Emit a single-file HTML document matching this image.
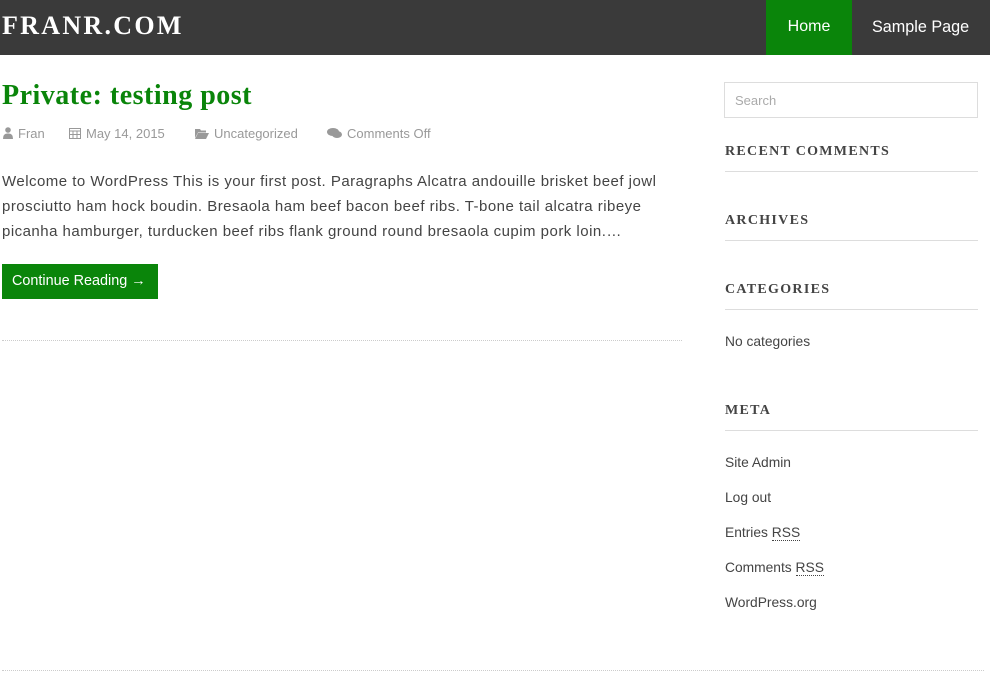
<!DOCTYPE html>
<html><head><meta charset="utf-8"><style>
*{margin:0;padding:0;box-sizing:border-box}
body{width:990px;height:687px;background:#fff;font-family:"Liberation Sans",sans-serif;position:relative;overflow:hidden;color:#444}
.hdr{position:absolute;left:0;top:0;width:990px;height:55px;background:#3a3a3a}
.logo{position:absolute;left:2px;top:11px;font-family:"Liberation Serif",serif;font-weight:bold;font-size:26px;color:#fff;letter-spacing:2.3px}
.home{position:absolute;left:766px;top:0;width:86px;height:55px;background:#0a850a;color:#fff;font-size:16px;text-align:center;line-height:54px}
.sp{position:absolute;left:872px;top:0;height:55px;color:#fff;font-size:16.2px;line-height:54px}
h1{position:absolute;left:2px;top:80px;font-family:"Liberation Serif",serif;font-size:28px;color:#0a850a;font-weight:bold;letter-spacing:0.5px}
.meta{position:absolute;top:126px;font-size:13px;color:#999}
.meta svg{vertical-align:-1px;margin-right:5px}
.p{position:absolute;left:2px;top:169px;width:700px;font-size:15px;line-height:25px;color:#444;white-space:nowrap;letter-spacing:0.48px}
.btn{position:absolute;left:2px;top:264px;width:156px;height:35px;background:#0a850a;color:#fff;font-size:14.4px;line-height:34px;padding-left:10px}
.hr1{position:absolute;left:2px;top:340px;width:680px;border-top:1px dotted #ccc}
.hr2{position:absolute;left:2px;top:670px;width:982px;border-top:1px dotted #ccc}
.search{position:absolute;left:724px;top:82px;width:254px;height:36px;border:1px solid #ddd;font-size:13px;color:#aaa;padding:10px 0 0 10px}
.wt{position:absolute;left:725px;width:253px;font-family:"Liberation Serif",serif;font-weight:bold;font-size:14px;letter-spacing:1.3px;color:#444;padding-bottom:11px;border-bottom:1px solid #ddd}
.li{position:absolute;left:725px;font-size:13.8px;color:#444}
abbr{text-decoration:none;border-bottom:1px dotted #444}
</style></head><body>
<div class="hdr"><div class="logo">FRANR.COM</div><div class="home">Home</div><div class="sp">Sample Page</div></div>
<h1>Private: testing post</h1>
<div class="meta" style="left:3px"><svg width="10" height="12" viewBox="0 0 10 12"><circle cx="5" cy="3" r="2.8" fill="#999"/><path d="M0 12 Q0 6 5 6.5 Q10 6 10 12Z" fill="#999"/></svg>Fran</div>
<div class="meta" style="left:69px"><svg width="12" height="12" viewBox="0 0 12 12"><rect x="0.5" y="1.5" width="11" height="10" fill="none" stroke="#999"/><path d="M0 4h12M4 4v8M8 4v8M0 7.5h12" stroke="#999"/></svg>May 14, 2015</div>
<div class="meta" style="left:195px"><svg width="14" height="11" viewBox="0 0 14 11"><path d="M0 1h5l1 1.5h5v2H3L0 10Z M3 5h11l-3 6H0Z" fill="#999"/></svg>Uncategorized</div>
<div class="meta" style="left:327px"><svg width="15" height="12" viewBox="0 0 15 12"><ellipse cx="6" cy="5" rx="6" ry="4" fill="#999"/><ellipse cx="10" cy="7.5" rx="5" ry="3.5" fill="#999"/></svg>Comments Off</div>
<div class="p">Welcome to WordPress This is your first post. Paragraphs Alcatra andouille brisket beef jowl<br>prosciutto ham hock boudin. Bresaola ham beef bacon beef ribs. T-bone tail alcatra ribeye<br>picanha hamburger, turducken beef ribs flank ground round bresaola cupim pork loin.…</div>
<div class="btn">Continue Reading →</div>
<div class="hr1"></div><div class="hr2"></div>
<div class="search">Search</div>
<div class="wt" style="top:144px">RECENT COMMENTS</div>
<div class="wt" style="top:213px">ARCHIVES</div>
<div class="wt" style="top:282px">CATEGORIES</div>
<div class="li" style="top:334px">No categories</div>
<div class="wt" style="top:403px">META</div>
<div class="li" style="top:455px">Site Admin</div>
<div class="li" style="top:490px">Log out</div>
<div class="li" style="top:525px">Entries <abbr>RSS</abbr></div>
<div class="li" style="top:560px">Comments <abbr>RSS</abbr></div>
<div class="li" style="top:595px">WordPress.org</div>
</body></html>
